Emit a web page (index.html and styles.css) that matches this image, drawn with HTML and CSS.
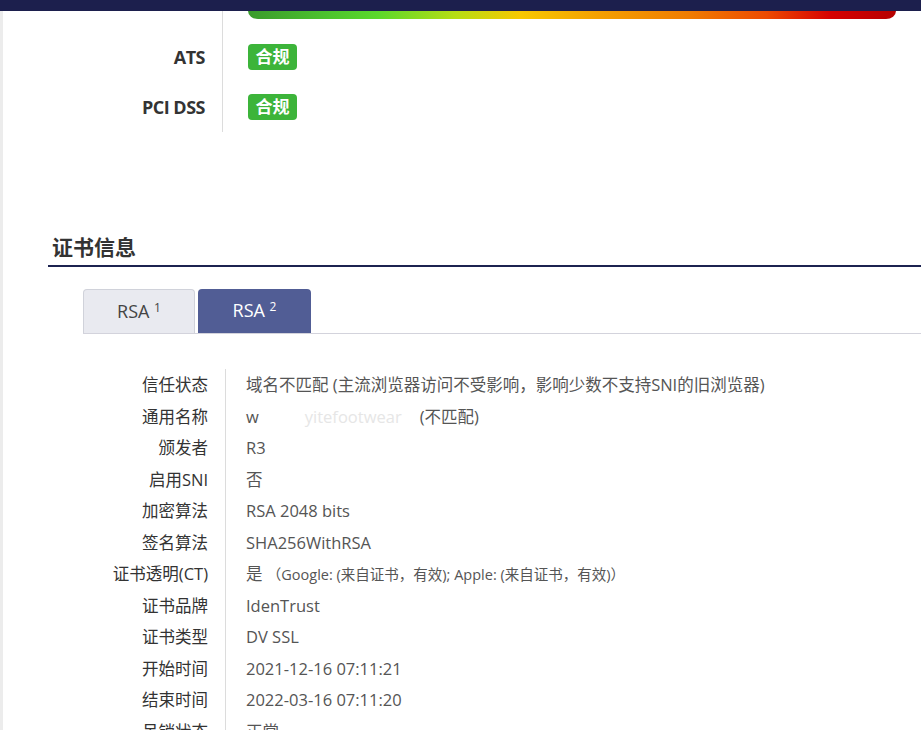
FILE: index.html
```html
<!DOCTYPE html>
<html lang="zh-CN">

<head>
    <meta charset="UTF-8">
    <meta name="viewport" content="width=device-width, initial-scale=1.0">
    <title>证书信息</title>
    <link rel="stylesheet" href="styles.css">
</head>

<body>

    <!-- 顶部导航 -->
    <div class="topbar"></div>

    <div class="page">

        <!-- 评级 / 合规 -->
        <div class="score">
            <div class="score_row bar_row">
                <div class="score_label"></div>
                <div class="score_value">
                    <div class="grade_bar"></div>
                </div>
            </div>
            <div class="score_row">
                <div class="score_label">ATS</div>
                <div class="score_value"><span class="badge">合规</span></div>
            </div>
            <div class="score_row">
                <div class="score_label">PCI DSS</div>
                <div class="score_value"><span class="badge">合规</span></div>
            </div>
        </div>

        <!-- 证书信息 -->
        <h2 class="section_title">证书信息</h2>

        <div class="tabs">
            <div class="tab">RSA <sup>1</sup></div>
            <div class="tab active">RSA <sup>2</sup></div>
        </div>

        <div class="info">
            <div class="info_row">
                <div class="info_label">信任状态</div>
                <div class="info_value">域名不匹配 (主流浏览器访问不受影响，影响少数不支持SNI的旧浏览器)</div>
            </div>
            <div class="info_row">
                <div class="info_label">通用名称</div>
                <div class="info_value">w<span class="masked">yitefootwear</span><span class="mismatch">(不匹配)</span></div>
            </div>
            <div class="info_row">
                <div class="info_label">颁发者</div>
                <div class="info_value">R3</div>
            </div>
            <div class="info_row">
                <div class="info_label">启用SNI</div>
                <div class="info_value">否</div>
            </div>
            <div class="info_row">
                <div class="info_label">加密算法</div>
                <div class="info_value">RSA 2048 bits</div>
            </div>
            <div class="info_row">
                <div class="info_label">签名算法</div>
                <div class="info_value">SHA256WithRSA</div>
            </div>
            <div class="info_row">
                <div class="info_label">证书透明(CT)</div>
                <div class="info_value">是 <span class="small">（Google: (来自证书，有效); Apple: (来自证书，有效)）</span></div>
            </div>
            <div class="info_row">
                <div class="info_label">证书品牌</div>
                <div class="info_value">IdenTrust</div>
            </div>
            <div class="info_row">
                <div class="info_label">证书类型</div>
                <div class="info_value">DV SSL</div>
            </div>
            <div class="info_row">
                <div class="info_label">开始时间</div>
                <div class="info_value">2021-12-16 07:11:21</div>
            </div>
            <div class="info_row">
                <div class="info_label">结束时间</div>
                <div class="info_value">2022-03-16 07:11:20</div>
            </div>
            <div class="info_row">
                <div class="info_label">吊销状态</div>
                <div class="info_value">正常</div>
            </div>
        </div>

    </div>

</body>

</html>
```

FILE: styles.css
```css
html,
body {
    margin: 0;
    padding: 0;
}

body {
    background-color: #ececec;
    font-family: "Open Sans", "Noto Sans CJK SC", sans-serif;
    overflow: hidden;
    height: 730px;
}

.topbar {
    height: 11px;
    background-color: #1c1f4d;
}

.page {
    margin-left: 3px;
    background-color: #fff;
    height: 719px;
    overflow: hidden;
}

/* 评级区域 */
.score {
    display: flex;
    flex-direction: column;
}

.score_row {
    display: flex;
    height: 50px;
}

.bar_row {
    height: 21px;
}

.score_label {
    width: 202px;
    padding-right: 17px;
    border-right: 1px solid #dcdcdc;
    text-align: right;
    font-size: 18px;
    font-weight: bold;
    color: #333;
    line-height: 50px;
    letter-spacing: -0.5px;
}

.score_value {
    padding-left: 25px;
    display: flex;
    align-items: center;
}

.bar_row .score_value {
    align-items: flex-start;
}

.grade_bar {
    width: 648px;
    height: 8px;
    border-radius: 0 0 10px 10px / 0 0 8px 8px;
    background: linear-gradient(to right, #3a9a2c 0%, #4cc22e 12%, #5bd92b 20%, #b6dd14 32%, #f7c800 42%, #f4a000 54%, #f07c00 68%, #ec4a00 80%, #d60000 90%, #b50000 100%);
}

.badge {
    display: inline-block;
    width: 49px;
    height: 26px;
    line-height: 26px;
    text-align: center;
    border-radius: 4px;
    background-color: #3cb43a;
    color: #fff;
    font-size: 17px;
    font-weight: bold;
}

/* 证书信息 */
.section_title {
    margin: 100px 0 0 45px;
    padding: 0 0 3px 4px;
    font-size: 21px;
    line-height: 30px;
    font-weight: bold;
    color: #333;
    border-bottom: 2px solid #1c2350;
}

.tabs {
    display: flex;
    gap: 3px;
    margin: 22px 0 0 80px;
    border-bottom: 1px solid #d3d3dc;
}

.tab {
    width: 110px;
    height: 43px;
    line-height: 42px;
    text-align: center;
    font-size: 18px;
    color: #444;
    background-color: #e9eaf0;
    border: 1px solid #d0d2da;
    border-bottom: none;
    border-radius: 4px 4px 0 0;
}

.tab sup {
    font-size: 12px;
    vertical-align: 6px;
    line-height: 0;
}

.tab.active {
    width: 113px;
    height: 44px;
    border: none;
    background-color: #515d95;
    color: #fff;
}

.info {
    padding-top: 35px;
}

.info_row {
    display: flex;
    height: 31.5px;
    line-height: 31.5px;
    font-size: 16.5px;
}

.info_label {
    width: 205px;
    padding-right: 17px;
    text-align: right;
    color: #333;
    border-right: 1px solid #dcdcdc;
}

.info_value {
    padding-left: 20px;
    color: #555;
    white-space: nowrap;
}

.masked {
    margin-left: 46px;
    color: #e6e6e6;
}

.mismatch {
    margin-left: 18px;
}

.small {
    font-size: 14.5px;
}
```
